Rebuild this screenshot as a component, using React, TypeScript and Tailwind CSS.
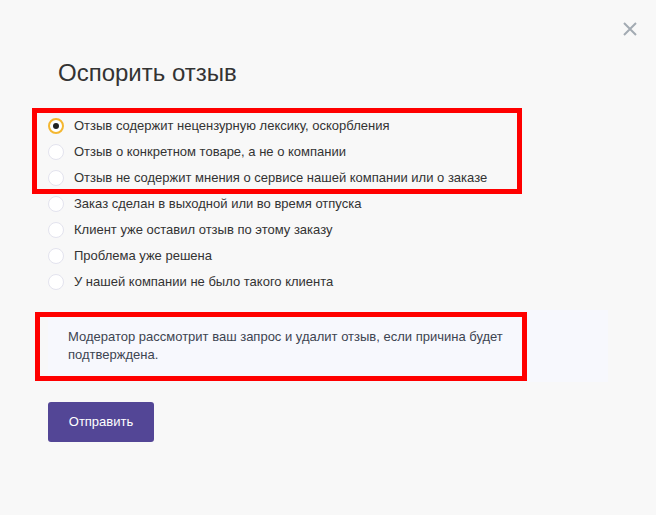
import React, { useState } from 'react';

const reasons = [
  'Отзыв содержит нецензурную лексику, оскорбления',
  'Отзыв о конкретном товаре, а не о компании',
  'Отзыв не содержит мнения о сервисе нашей компании или о заказе',
  'Заказ сделан в выходной или во время отпуска',
  'Клиент уже оставил отзыв по этому заказу',
  'Проблема уже решена',
  'У нашей компании не было такого клиента',
];

export default function App() {
  const [selected, setSelected] = useState(0);

  return (
    <div
      className="relative min-h-[515px] w-full bg-[#f8f8f8] text-[#333] pl-12 pt-[59px]"
      style={{ fontFamily: '"Liberation Sans", Arial, sans-serif' }}
    >
      {/* close */}
      <button className="absolute right-[19px] top-[22px] text-[#a3abb3]" aria-label="Закрыть">
        <svg width="14" height="14" viewBox="0 0 14 14">
          <path d="M1 1L13 13M13 1L1 13" stroke="currentColor" strokeWidth="2" />
        </svg>
      </button>

      <h2 className="pl-[10px] text-[24px] leading-[28px] text-[#333]">Оспорить отзыв</h2>

      <div className="mt-[26px] flex flex-col">
        {reasons.map((r, i) => (
          <label
            key={r}
            className="flex h-[26px] cursor-pointer items-center gap-[10px] text-[13px]"
            onClick={() => setSelected(i)}
          >
            {selected === i ? (
              <span className="flex h-4 w-4 items-center justify-center rounded-full border-2 border-[#f4b731] bg-white">
                <span className="h-[6px] w-[6px] rounded-full bg-[#222]" />
              </span>
            ) : (
              <span className="h-4 w-4 rounded-full border border-[#e3e3ee] bg-white" />
            )}
            <span>{r}</span>
          </label>
        ))}
      </div>

      <div className="mt-[15px] w-[560px] bg-[#f7f8fd] py-[18px] pl-5 pr-[70px] text-[13px] leading-[18px] text-[#3d4451]">
        Модератор рассмотрит ваш запрос и удалит отзыв, если причина будет подтверждена.
      </div>

      <button className="mt-5 h-10 w-[106px] rounded-[3px] bg-[#534696] text-[13px] text-white">
        Отправить
      </button>

      {/* annotation frames */}
      <div className="pointer-events-none absolute left-[32px] top-[108px] h-[86px] w-[490px] border-[5px] border-[#ff0000]" />
      <div className="pointer-events-none absolute left-[35px] top-[312px] h-[69px] w-[492px] border-[5px] border-[#ff0000]" />
    </div>
  );
}
